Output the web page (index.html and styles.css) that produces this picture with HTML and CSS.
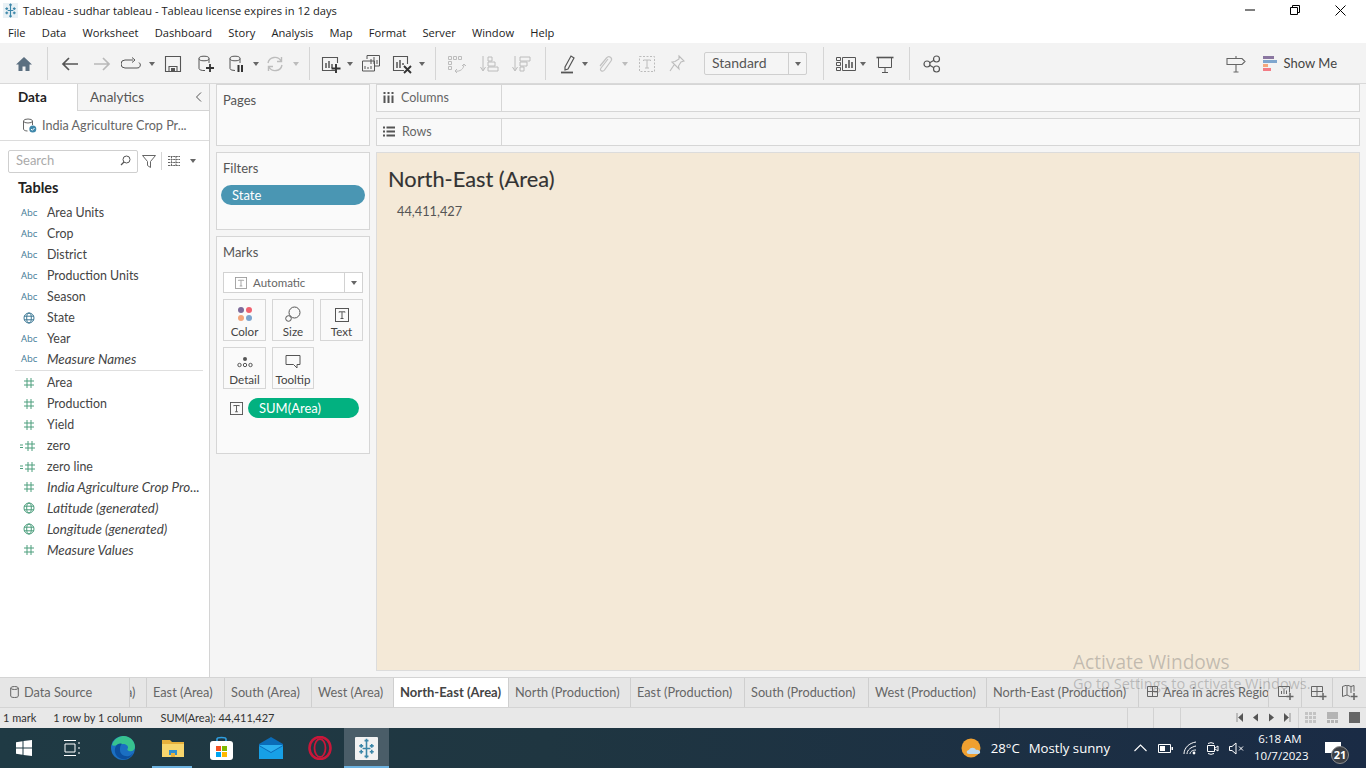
FILE: index.html
```html
<!DOCTYPE html>
<html lang="en">
<head>
  <meta charset="UTF-8" />
  <title>Tableau - sudhar tableau</title>
  <link rel="stylesheet" href="styles.css">
</head>
<body>

  <!-- shared icons -->
  <svg class="sprite" width="0" height="0">
    <symbol id="logo" viewBox="0 0 16 16">
      <g stroke="#3b86a8" stroke-width="1.2" fill="none">
        <path d="M8 2v12M5 8h6M4 4.500v3M2.500 6h3M12 4.500v3M10.500 6h3M4 9v3M2.500 10.500h3M12 9v3M10.500 10.500h3M8 .5v3M6.500 2h3M8 12.500v3M6.500 14h3"/>
      </g>
    </symbol>
    <symbol id="caret" viewBox="0 0 8 20"><path d="M1 8h6l-3 4z" fill="currentColor"/></symbol>
    <symbol id="hash" viewBox="0 0 12 12">
      <path d="M4 1v10M8 1v10M1 4h10M1 8h10" stroke="currentColor" fill="none"/>
    </symbol>
    <symbol id="calc" viewBox="0 0 18 12">
      <path d="M1 5h3M1 7.500h3M9 1v10M13 1v10M6 4h10M6 8h10" stroke="currentColor" fill="none"/>
    </symbol>
    <symbol id="globe" viewBox="0 0 12 12">
      <g stroke="currentColor" fill="none">
        <circle cx="6" cy="6" r="5"/><ellipse cx="6" cy="6" rx="2.300" ry="5"/><path d="M1 4.200h10M1 7.800h10"/>
      </g>
    </symbol>
    <symbol id="tbox" viewBox="0 0 14 14">
      <rect x=".5" y=".5" width="13" height="13" fill="none" stroke="currentColor"/>
      <path d="M4 4.500V3.800h6v.7M7 4v6.500M5.500 10.500h3" fill="none" stroke="currentColor"/>
    </symbol>
  </svg>

  <!-- title and menu -->
  <div class="titlebar">
    <svg class="app-logo"><use href="#logo"/></svg>
    <span class="title-text">Tableau - sudhar tableau - Tableau license expires in 12 days</span>
    <div class="window-btns">
      <svg width="10" height="10" viewBox="0 0 10 10"><path d="M0 5h10" stroke="#000"/></svg>
      <svg width="10" height="10" viewBox="0 0 10 10"><path d="M.5 2.500h7v7h-7zM2.500 2.500V.5h7v7h-2" fill="none" stroke="#000"/></svg>
      <svg width="11" height="11" viewBox="0 0 11 11"><path d="M.5.500l10 10M10.500.5l-10 10" stroke="#000"/></svg>
    </div>
  </div>
  <nav class="menubar">
    <span>File</span><span>Data</span><span>Worksheet</span><span>Dashboard</span><span>Story</span><span>Analysis</span><span>Map</span><span>Format</span><span>Server</span><span>Window</span><span>Help</span>
  </nav>

  <!-- toolbar -->
  <div class="toolbar">
    <svg class="ti" viewBox="0 0 20 20"><path d="M10 3L2 10.500h2.500V17h4v-4.500h3V17h4v-6.500H18z" fill="#5b6f80"/></svg>
    <i class="sep ml13"></i>
    <svg class="ti ml12" viewBox="0 0 20 20"><path d="M18 10H3M9 4l-6 6 6 6" fill="none" stroke="#555" stroke-width="1.700"/></svg>
    <svg class="ti ml12" viewBox="0 0 20 20"><path d="M2 10h15M11 4l6 6-6 6" fill="none" stroke="#b9b9b9" stroke-width="1.700"/></svg>
    <svg class="ti ml9" viewBox="0 0 20 20"><path d="M12 6H4a3 3 0 0 0 0 8h12a3 3 0 0 0 2-5.500M11 3.500L14 6l-3 2.500" fill="none" stroke="#555"/></svg>
    <svg class="tc ml7"><use href="#caret"/></svg>
    <svg class="ti ml7" viewBox="0 0 20 20"><path d="M2.500 2.500h15v15h-15zM6 17.500v-5h8v5" fill="none" stroke="#555" stroke-width="1.100"/><path d="M8 14h4v3.500H8z" fill="#555"/></svg>
    <svg class="ti ml12" viewBox="0 0 20 20"><path d="M4 4.500v10a5 2 0 0 0 6 2M14 9V4.500" fill="none" stroke="#555"/><ellipse cx="9" cy="4.500" rx="5" ry="2.300" fill="none" stroke="#555"/><path d="M15 10v8M11 14h8" stroke="#333" stroke-width="1.800"/></svg>
    <svg class="ti ml11" viewBox="0 0 20 20"><path d="M4 4.500v10a5 2 0 0 0 5 2M14 9V4.500" fill="none" stroke="#555"/><ellipse cx="9" cy="4.500" rx="5" ry="2.300" fill="none" stroke="#555"/><path d="M12.500 11v7M16 11v7" stroke="#333" stroke-width="2"/></svg>
    <svg class="tc ml6"><use href="#caret"/></svg>
    <svg class="ti ml5" viewBox="0 0 20 20"><path d="M3 9a7 7 0 0 1 13-2M17 11a7 7 0 0 1-13 2M16.500 3v4.500H12M3.500 17v-4.500H8" fill="none" stroke="#bcbcbc" stroke-width="1.400"/></svg>
    <svg class="tc ml7 off"><use href="#caret"/></svg>
    <i class="sep ml9"></i>
    <svg class="ti ml11" viewBox="0 0 20 20"><path d="M14 16.500H1.500v-13h15V9" fill="none" stroke="#555" stroke-width="1.100"/><path d="M5 9v5M8 7v7M11 10v4" stroke="#555" stroke-width="1.500"/><path d="M15 10v9M10.500 14.500h9" stroke="#333" stroke-width="1.900"/></svg>
    <svg class="tc ml5"><use href="#caret"/></svg>
    <svg class="ti ml7" viewBox="0 0 20 20"><path d="M6 5V1.500h12.500V12H14M1.500 7h12v10h-12z" fill="#f3f3f3" stroke="#555"/><path d="M4 15v-3M7 15v-2M10 15v-3M10 10V5M13 10V3M16 10V6" stroke="#555"/></svg>
    <svg class="ti ml11" viewBox="0 0 20 20"><path d="M12 16.500H1.500v-14h14V10" fill="none" stroke="#555" stroke-width="1.100"/><path d="M5 8v6M8 6v8M11 9v2" stroke="#555" stroke-width="1.500"/><path d="M12 12l7 7M19 12l-7 7" stroke="#333" stroke-width="1.900"/></svg>
    <svg class="tc ml6"><use href="#caret"/></svg>
    <i class="sep ml9"></i>
    <svg class="ti ml11" viewBox="0 0 20 20"><g fill="none" stroke="#bcbcbc"><path d="M1.500 2.500h3v3h-3zM6.500 2.500h3v3h-3zM11.500 2.500h3v3h-3zM1.500 7.500h3v3h-3zM1.500 12.500h3v3h-3z"/><path d="M8 17c5 1 9-2 9-7M15 12l2-2 2 2M10 15l-2 2 2 2"/></g></svg>
    <svg class="ti ml12" viewBox="0 0 20 20"><g fill="none" stroke="#bcbcbc"><path d="M4 2v14M1.500 13L4 17l2.500-4" /><path d="M9 3h4v4H9zM9 8h7v4H9zM9 13h10v4H9z"/></g></svg>
    <svg class="ti ml12" viewBox="0 0 20 20"><g fill="none" stroke="#bcbcbc"><path d="M4 2v14M1.500 13L4 17l2.500-4" /><path d="M9 3h10v4H9zM9 8h7v4H9zM9 13h4v4H9z"/></g></svg>
    <i class="sep ml14"></i>
    <svg class="ti ml12" viewBox="0 0 20 20"><path d="M7 13L13 2l3 2-6 11-3 1z" fill="none" stroke="#555" stroke-width="1.200"/><path d="M3 18.500h12" stroke="#555" stroke-width="1.800"/></svg>
    <svg class="tc ml3"><use href="#caret"/></svg>
    <svg class="ti ml6" viewBox="0 0 20 20"><path d="M13 5l-7 9c-2 3 2 4 3.500 2L16 7c2-3-2-6-4.500-3L5 12" fill="none" stroke="#c2c2c2" stroke-width="1.200"/></svg>
    <svg class="tc ml6 off"><use href="#caret"/></svg>
    <svg class="ti ml8" viewBox="0 0 20 20"><path d="M2.500 2.500h15v15h-15z" fill="none" stroke="#bcbcbc" stroke-dasharray="2 1.500"/><path d="M6.500 7V6h7v1M10 6v8M8 14h4" fill="none" stroke="#bcbcbc"/></svg>
    <svg class="ti ml10" viewBox="0 0 20 20"><path d="M12 2l5 5-3 1-2.500 4 .5 3-7-7 3-.5 4-2.500zM7 11l-4 6" fill="none" stroke="#bcbcbc" stroke-width="1.100"/></svg>
    <div class="fit-select ml17"><span>Standard</span><b><svg class="tc"><use href="#caret"/></svg></b></div>
    <i class="sep ml16"></i>
    <svg class="ti ml12" viewBox="0 0 20 20"><g fill="none" stroke="#555"><path d="M.5 3.500h4v3h-4zM.5 8.500h4v3h-4zM.5 13.500h4v3h-4zM6.500 3.500h13v13h-13z"/></g><path d="M10 14v-4M13 14V6M16 14v-6" stroke="#555" stroke-width="1.600"/></svg>
    <svg class="tc ml3"><use href="#caret"/></svg>
    <svg class="ti ml8" viewBox="0 0 20 20"><path d="M3.500 4v9.500h13V4M10 14v4M7 18.500h6" fill="none" stroke="#555"/><path d="M1.500 3.500h17" stroke="#555" stroke-width="1.600"/></svg>
    <i class="sep ml14"></i>
    <svg class="ti ml12" viewBox="0 0 20 20"><g fill="none" stroke="#555" stroke-width="1.200"><circle cx="5" cy="10" r="3"/><circle cx="14.500" cy="5" r="3"/><circle cx="14.500" cy="15" r="3"/><path d="M7.700 8.700L12 6.300M7.700 11.300L12 13.700"/></g></svg>
    <div class="toolbar-right">
      <svg class="ti" viewBox="0 0 20 20"><path d="M1 4.500h15l3 3-3 3H1zM10 2v2.500M10 10.500V18M7.500 18h5" fill="none" stroke="#666" stroke-width="1.100"/></svg>
      <div class="showme">
        <svg width="15" height="16" viewBox="0 0 15 16"><path d="M0 0h11v3H0z" fill="#8a76a0"/><path d="M0 4h14v3H0z" fill="#7fa6ce"/><path d="M0 8h5v3H0z" fill="#f4a77c"/><path d="M0 12h8v3H0z" fill="#f37c85"/></svg>
        <span>Show Me</span>
      </div>
    </div>
  </div>

  <!-- main area -->
  <div class="workspace">
    <aside class="data-pane">
      <div class="pane-tabs">
        <div class="pane-tab active">Data</div>
        <div class="pane-tab">Analytics
          <svg class="collapse" width="7" height="10" viewBox="0 0 7 10"><path d="M6 .5L1.500 5 6 9.500" fill="none" stroke="#555"/></svg>
        </div>
      </div>
      <div class="source-row">
        <svg width="15" height="15" viewBox="0 0 15 15"><ellipse cx="6" cy="3" rx="4.500" ry="2" fill="none" stroke="#666"/><path d="M1.500 3v8c0 1 1.500 2 4 2M10.500 3v4" fill="none" stroke="#666"/><circle cx="10.800" cy="11" r="3.500" fill="#3f88ab"/><path d="M9 11l1.300 1.300L12.500 10" fill="none" stroke="#fff"/></svg>
        <span>India Agriculture Crop Pr...</span>
      </div>
      <div class="search-row">
        <div class="search-box"><span>Search</span>
          <svg width="11" height="11" viewBox="0 0 11 11"><circle cx="6.500" cy="4.500" r="3.500" fill="none" stroke="#555"/><path d="M4 7l-3 3" stroke="#555" stroke-width="1.300"/></svg>
        </div>
        <svg class="search-filter" width="14" height="13" viewBox="0 0 14 13"><path d="M.5.500h13L8.500 6.500v6l-3-2v-4z" fill="none" stroke="#666"/></svg>
        <i class="search-sep"></i>
        <svg class="search-list" width="12" height="10" viewBox="0 0 12 10"><path d="M0 .5h12M0 3.500h12M0 6.500h12M0 9.500h12M3.500 0v10M8 0v10" stroke="#666" stroke-dasharray="2 .6"/></svg>
        <svg class="tc search-caret"><use href="#caret"/></svg>
      </div>
      <h3 class="tables-title">Tables</h3>
      <ul class="field-list">
        <li><span class="abc">Abc</span>Area Units</li>
        <li><span class="abc">Abc</span>Crop</li>
        <li><span class="abc">Abc</span>District</li>
        <li><span class="abc">Abc</span>Production Units</li>
        <li><span class="abc">Abc</span>Season</li>
        <li><span class="ficon dim"><svg width="12" height="12"><use href="#globe"/></svg></span>State</li>
        <li><span class="abc">Abc</span>Year</li>
        <li class="gen"><span class="abc">Abc</span>Measure Names</li>
      </ul>
      <hr class="field-sep">
      <ul class="field-list">
        <li><span class="ficon"><svg width="12" height="12"><use href="#hash"/></svg></span>Area</li>
        <li><span class="ficon"><svg width="12" height="12"><use href="#hash"/></svg></span>Production</li>
        <li><span class="ficon"><svg width="12" height="12"><use href="#hash"/></svg></span>Yield</li>
        <li><span class="ficon"><svg class="calc" width="18" height="12"><use href="#calc"/></svg></span>zero</li>
        <li><span class="ficon"><svg class="calc" width="18" height="12"><use href="#calc"/></svg></span>zero line</li>
        <li class="gen"><span class="ficon"><svg width="12" height="12"><use href="#hash"/></svg></span>India Agriculture Crop Pro...</li>
        <li class="gen"><span class="ficon"><svg width="12" height="12"><use href="#globe"/></svg></span>Latitude (generated)</li>
        <li class="gen"><span class="ficon"><svg width="12" height="12"><use href="#globe"/></svg></span>Longitude (generated)</li>
        <li class="gen"><span class="ficon"><svg width="12" height="12"><use href="#hash"/></svg></span>Measure Values</li>
      </ul>
    </aside>

    <section class="cards">
      <div class="card card-pages"><div class="card-title">Pages</div></div>
      <div class="card card-filters">
        <div class="card-title">Filters</div>
        <div class="pill pill-blue">State</div>
      </div>
      <div class="card card-marks">
        <div class="card-title">Marks</div>
        <div class="mark-select">
          <svg class="mark-t" width="12" height="12"><use href="#tbox"/></svg>
          <span>Automatic</span>
          <b><svg class="tc"><use href="#caret"/></svg></b>
        </div>
        <div class="mark-grid">
          <div class="mark-btn">
            <svg width="16" height="16" viewBox="0 0 16 16"><circle cx="4" cy="4" r="3" fill="#7d6a9a"/><circle cx="12" cy="4" r="3" fill="#f0616f"/><circle cx="4" cy="12" r="3" fill="#f3a47a"/><circle cx="12" cy="12" r="3" fill="#7ba4cf"/></svg>
            Color
          </div>
          <div class="mark-btn">
            <svg width="16" height="16" viewBox="0 0 16 16"><circle cx="9.500" cy="6.500" r="5.500" fill="none" stroke="#555"/><circle cx="3.500" cy="12.500" r="2.800" fill="#fafafa" stroke="#555"/></svg>
            Size
          </div>
          <div class="mark-btn">
            <svg class="tdark" width="14" height="14"><use href="#tbox"/></svg>
            Text
          </div>
          <div class="mark-btn">
            <svg width="16" height="16" viewBox="0 0 16 16"><circle cx="8" cy="5" r="2" fill="#555"/><g fill="none" stroke="#555"><circle cx="2.500" cy="11" r="1.700"/><circle cx="8" cy="11" r="1.700"/><circle cx="13.500" cy="11" r="1.700"/></g></svg>
            Detail
          </div>
          <div class="mark-btn">
            <svg width="16" height="16" viewBox="0 0 16 16"><path d="M1 1.500h14v9h-3v3.500l-3.500-3.500H1z" fill="none" stroke="#555"/></svg>
            Tooltip
          </div>
        </div>
        <div class="mark-field">
          <svg class="tdark" width="13" height="13"><use href="#tbox"/></svg>
          <div class="pill pill-green">SUM(Area)</div>
        </div>
      </div>
    </section>

    <section class="view">
      <div class="shelf">
        <div class="shelf-label">
          <svg width="11" height="11" viewBox="0 0 11 11"><path d="M1.500 0v2M1.500 3.500V11M5.500 0v2M5.500 3.500V11M9.500 0v2M9.500 3.500V11" stroke="#555" stroke-width="2"/></svg>
          Columns
        </div>
      </div>
      <div class="shelf">
        <div class="shelf-label">
          <svg width="12" height="11" viewBox="0 0 12 11"><path d="M0 1.500h2M3.500 1.500H12M0 5.500h2M3.500 5.500H12M0 9.500h2M3.500 9.500H12" stroke="#555" stroke-width="1.800"/></svg>
          Rows
        </div>
      </div>
      <div class="canvas">
        <h2 class="sheet-title">North-East (Area)</h2>
        <div class="sheet-value">44,411,427</div>
      </div>
    </section>
  </div>

  <!-- sheet tabs -->
  <div class="tabbar">
    <div class="tab tab-source">
      <svg width="9" height="12" viewBox="0 0 9 12"><ellipse cx="4.500" cy="2" rx="3.800" ry="1.500" fill="none" stroke="#666"/><path d="M.7 2v8c0 1 1.500 1.500 3.800 1.500S8.300 11 8.300 10V2" fill="none" stroke="#666"/></svg>
      Data Source
    </div>
    <div class="tab tab-cut"><span>a)</span></div>
    <div class="tab t78">East (Area)</div>
    <div class="tab t87">South (Area)</div>
    <div class="tab t82">West (Area)</div>
    <div class="tab t115 active">North-East (Area)</div>
    <div class="tab t122">North (Production)</div>
    <div class="tab t114">East (Production)</div>
    <div class="tab t124">South (Production)</div>
    <div class="tab t118">West (Production)</div>
    <div class="tab t152">North-East (Production)</div>
    <div class="tab t130">
      <svg width="12" height="11" viewBox="0 0 12 11"><path d="M.5.500h10v10H.5zM.5 5.500h10M5.500.5v10" fill="none" stroke="#666"/></svg>
      Area in acres Regio
    </div>
    <div class="tab t33 tab-new">
      <svg width="18" height="16" viewBox="0 0 18 16"><path d="M9 11.500H.5v-10h11v6" fill="none" stroke="#666"/><path d="M3.500 9V6M6 9V4M8.500 9V5.500" stroke="#666"/><path d="M12 8v7M8.500 11.500h7" stroke="#666" stroke-width="1.500"/></svg>
    </div>
    <div class="tab t31 tab-new">
      <svg width="18" height="16" viewBox="0 0 18 16"><path d="M9 11.500H.5v-10h11v6M.5 6.500h11M6 1.500v10" fill="none" stroke="#666"/><path d="M12 8v7M8.500 11.500h7" stroke="#666" stroke-width="1.500"/></svg>
    </div>
    <div class="tab tab-last tab-new">
      <svg width="18" height="16" viewBox="0 0 18 16"><path d="M8 11.500L5 10l-4.500 1.500v-10L5 0l4 1.500 3-1v6M5 0v10M9 1.500V8" fill="none" stroke="#666"/><path d="M12 8v7M8.500 11.500h7" stroke="#666" stroke-width="1.500"/></svg>
    </div>
  </div>

  <!-- status bar -->
  <div class="statusbar">
    <span class="st-mark">1 mark</span>
    <span class="st-rows">1 row by 1 column</span>
    <span class="st-sum">SUM(Area): 44,411,427</span>
    <i class="st-div st-d1"></i><i class="st-div st-d2"></i><i class="st-div st-d3"></i><i class="st-div st-d4"></i>
    <div class="pager">
      <svg width="7" height="9" viewBox="0 0 7 9"><path d="M1 0v9M7 .5v8L2.500 4.500z" fill="#555" stroke="#555" stroke-width=".6"/></svg>
      <svg width="7" height="9" viewBox="0 0 7 9"><path d="M6 .5v8L1 4.500z" fill="#555"/></svg>
      <svg width="7" height="9" viewBox="0 0 7 9"><path d="M1 .5v8L6 4.500z" fill="#555"/></svg>
      <svg width="7" height="9" viewBox="0 0 7 9"><path d="M6 0v9M0 .5v8L4.500 4.500z" fill="#555" stroke="#555" stroke-width=".6"/></svg>
    </div>
    <i class="st-div st-d5"></i>
    <div class="view-modes">
      <svg width="11" height="11" viewBox="0 0 11 11"><path d="M0 0h3v3H0zM4 0h3v3H4zM8 0h3v3H8zM0 4h3v3H0zM4 4h3v3H4zM8 4h3v3H8zM0 8h3v3H0zM4 8h3v3H4zM8 8h3v3H8z" fill="#c4c4c4"/></svg>
      <svg width="11" height="11" viewBox="0 0 11 11"><path d="M0 0h11v7H0zM0 8h3v3H0zM4 8h3v3H4zM8 8h3v3H8z" fill="#b4b4b4"/></svg>
      <svg width="11" height="11" viewBox="0 0 11 11"><path d="M0 0h11v11H0z" fill="#666"/></svg>
    </div>
  </div>

  <!-- windows taskbar -->
  <footer class="taskbar">
    <div class="task-icons">
      <div class="task-item w48">
        <svg width="16" height="16" viewBox="0 0 16 16"><path d="M0 2.300l6.500-1v6.300H0zM7.500 1.100L16 0v7.600H7.500zM0 8.500h6.500v6.300l-6.500-1zM7.500 8.500H16V16l-8.500-1.100z" fill="#fff"/></svg>
      </div>
      <div class="task-item w49">
        <svg width="17" height="16" viewBox="0 0 17 16"><path d="M0 .5h12M0 15.500h12M1 4h10v8H1zM15 2v2M15 7v2M15 12v2" fill="none" stroke="#fff"/></svg>
      </div>
      <div class="task-item w51">
        <svg width="24" height="24" viewBox="0 0 24 24">
          <circle cx="12" cy="12" r="12" fill="#1b6fc2"/>
          <path d="M1 9C3 2 9 0 13 0c6 0 11 5 11 11 0 3-3 5-6 4-2-.6-2-2-1-3 .5-2-2-4-5-4-5 0-9 3-11 1z" fill="#37c28f"/>
          <path d="M9 14c0 4 4 7 9 6 2-.5 3-2 4-3-2 5-7 7-11 6-6-1-9-8-6-13 1-2 4-3 6-2-2 1-2 4-2 6z" fill="#0c4f9e"/>
        </svg>
      </div>
      <div class="task-item w49 running">
        <svg width="22" height="20" viewBox="0 0 22 20"><path d="M0 2h8l2 2h12v15H0z" fill="#e8b13c"/><path d="M0 6h22v13H0z" fill="#f8d66d"/><path d="M7 12h8v5H7z" fill="#2f8fd0"/><path d="M9 15h4v4H9z" fill="#e8b13c"/></svg>
      </div>
      <div class="task-item w49">
        <svg width="23" height="24" viewBox="0 0 23 24"><path d="M7 6V3c0-2 9-2 9 0v3" fill="none" stroke="#2f9fe0" stroke-width="1.600"/><rect y="5" width="23" height="19" rx="3" fill="#fff"/><path d="M6 10h5v5H6z" fill="#f25022"/><path d="M12 10h5v5h-5z" fill="#7fba00"/><path d="M6 16h5v5H6z" fill="#00a4ef"/><path d="M12 16h5v5h-5z" fill="#ffb900"/></svg>
      </div>
      <div class="task-item w49">
        <svg width="24" height="22" viewBox="0 0 24 22"><path d="M12 0L0 7v15h24V7z" fill="#0b6cb8"/><path d="M0 8h24L12 15z" fill="#2cb0f0"/><path d="M0 9l12 7 12-7v13H0z" fill="#17a0e6"/></svg>
      </div>
      <div class="task-item w49">
        <svg width="24" height="24" viewBox="0 0 24 24"><ellipse cx="12" cy="12" rx="10.500" ry="11" fill="none" stroke="#c9173a" stroke-width="2.600"/><ellipse cx="12" cy="12" rx="5.500" ry="9" fill="none" stroke="#c9173a" stroke-width="1.800"/></svg>
      </div>
      <div class="task-item w45 active">
        <div class="tableau-tile"><svg width="21" height="21"><use href="#logo"/></svg></div>
      </div>
    </div>
    <div class="tray">
      <div class="weather">
        <svg width="22" height="20" viewBox="0 0 22 20"><circle cx="10" cy="10" r="9.500" fill="#f0a030"/><path d="M8 16c-3 0-3-4 0-4 1-3 6-3 7 0 4-1 6 4 2 4z" fill="#bcd9ef"/></svg>
        <span class="temp">28°C</span><span class="cond">Mostly sunny</span>
      </div>
      <svg class="tr-caret" width="13" height="8" viewBox="0 0 13 8"><path d="M.5 7l6-6 6 6" fill="none" stroke="#fff" stroke-width="1.100"/></svg>
      <svg class="tr-batt" width="15" height="9" viewBox="0 0 15 9"><path d="M.5.500h12v8H.5z" fill="none" stroke="#fff"/><path d="M2 2h5v5H2zM13.500 3H15v3h-1.500z" fill="#fff"/></svg>
      <svg class="tr-wifi" width="14" height="14" viewBox="0 0 14 14"><path d="M1 13C1 7 6 2 13 1M4 13c0-4 4-7 9-8M7 13c0-2 2-4 6-4" fill="none" stroke="#fff"/><circle cx="11" cy="12" r="1.400" fill="#fff"/></svg>
      <svg class="tr-meet" width="13" height="15" viewBox="0 0 13 15"><path d="M8 2.500A4 2 0 0 0 2 2.500M2 12.500a4 2 0 0 0 6 0M1.500 4.500h7v6h-7zM9 7l3-2v5l-3-2" fill="none" stroke="#fff"/></svg>
      <svg class="tr-vol" width="15" height="13" viewBox="0 0 15 13"><path d="M.5 4.500h2.500L7 1v11L3 8.500H.5zM10 4.500l4 4M14 4.500l-4 4" fill="none" stroke="#fff"/></svg>
      <div class="clock"><div>6:18 AM</div><div>10/7/2023</div></div>
      <div class="notify">
        <svg width="16" height="11" viewBox="0 0 16 11"><path d="M0 0h16v11H0z" fill="#fff"/></svg>
        <span class="notify-count">21</span>
      </div>
    </div>
  </footer>

  <!-- windows watermark, sits over the canvas and the tabs -->
  <div class="watermark">
    <div class="wm-big">Activate Windows</div>
    <div class="wm-small">Go to Settings to activate Windows.</div>
  </div>

</body>
</html>
```

FILE: styles.css
```css
* {
  margin: 0;
  padding: 0;
  box-sizing: border-box;
}

body {
  width: 1366px;
  height: 768px;
  overflow: hidden;
  position: relative;
  background: #fff;
  color: #444;
  font-family: Lato, "Open Sans", sans-serif;
  font-size: 13px;
}

ul {
  list-style: none;
}

svg {
  flex: none;
  display: block;
}

.sprite {
  position: absolute;
}

/* === TITLE + MENU === */
.titlebar {
  height: 22px;
  display: flex;
  align-items: center;
  padding: 0 0 2px 3px;
  font-family: "Open Sans", sans-serif;
  font-size: 11.15px;
  color: #222;
}

.app-logo {
  width: 15px;
  height: 15px;
  margin-right: 5px;
  background: #e9f1f5;
}

.window-btns {
  margin-left: auto;
  display: flex;
  align-items: center;
  gap: 35px;
  padding-right: 20px;
}

.menubar {
  height: 21px;
  display: flex;
  align-items: center;
  gap: 16.2px;
  padding-left: 8px;
  font-family: "Open Sans", sans-serif;
  font-size: 11.15px;
  color: #222;
}

/* === TOOLBAR === */
.toolbar {
  height: 41px;
  display: flex;
  align-items: center;
  padding: 1px 0 0 14px;
  background: #f3f3f3;
  border-bottom: 1px solid #d9d9d9;
  color: #666;
}

.ti {
  width: 20px;
  height: 20px;
}

.tc {
  width: 8px;
  height: 20px;
  color: #666;
}

.tc.off {
  color: #bcbcbc;
}

.sep {
  width: 1px;
  height: 33px;
  background: #d5d5d5;
}

.ml3 { margin-left: 3px; }
.ml5 { margin-left: 5px; }
.ml6 { margin-left: 6px; }
.ml7 { margin-left: 7px; }
.ml8 { margin-left: 8px; }
.ml9 { margin-left: 9px; }
.ml10 { margin-left: 10px; }
.ml11 { margin-left: 11px; }
.ml12 { margin-left: 12px; }
.ml13 { margin-left: 13px; }
.ml14 { margin-left: 14px; }
.ml16 { margin-left: 16px; }
.ml17 { margin-left: 17px; }

.fit-select {
  width: 103px;
  height: 23px;
  display: flex;
  align-items: center;
  padding-left: 7px;
  background: #f5f5f5;
  border: 1px solid #cfcfcf;
  border-radius: 2px;
  font-size: 14px;
  color: #555;
}

.fit-select span {
  padding-bottom: 2px;
}

.fit-select b {
  margin-left: auto;
  width: 18px;
  height: 100%;
  display: flex;
  align-items: center;
  justify-content: center;
  border-left: 1px solid #cfcfcf;
}

.toolbar-right {
  margin-left: auto;
  display: flex;
  align-items: center;
  padding-right: 29px;
}

.showme {
  display: flex;
  align-items: center;
  gap: 6px;
  margin-left: 17px;
  font-size: 13px;
  color: #444;
}

.showme span {
  padding-bottom: 2px;
}

/* === WORKSPACE === */
.workspace {
  height: 593px;
  display: flex;
  background: #f5f5f5;
}

.data-pane {
  width: 210px;
  flex: none;
  background: #fff;
  border-right: 1px solid #d4d4d4;
}

.pane-tabs {
  height: 27px;
  display: flex;
}

.pane-tab {
  position: relative;
  flex: 1;
  display: flex;
  align-items: center;
  padding: 0 0 1px 12px;
  background: #f5f5f5;
  border-bottom: 1px solid #d4d4d4;
  font-size: 13.5px;
  color: #555;
}

.pane-tab.active {
  flex: none;
  width: 78px;
  padding-left: 18px;
  background: #fff;
  border-right: 1px solid #d4d4d4;
  border-bottom: none;
  font-weight: 700;
  color: #222;
}

.collapse {
  position: absolute;
  right: 7px;
  top: 8px;
}

.source-row {
  height: 30px;
  display: flex;
  align-items: center;
  gap: 5px;
  padding: 0 0 1px 22px;
  border-bottom: 1px solid #dcdcdc;
  font-size: 12.6px;
  color: #666;
}

.search-row {
  height: 37px;
  display: flex;
  align-items: center;
  padding: 3px 0 0 8px;
}

.search-box {
  width: 130px;
  height: 23px;
  display: flex;
  align-items: center;
  justify-content: space-between;
  padding: 0 6px 2px 7px;
  border: 1px solid #cfcfcf;
  border-radius: 2px;
  color: #aaa;
}

.search-filter {
  margin-left: 4px;
}

.search-sep {
  width: 1px;
  height: 18px;
  margin-left: 5px;
  background: #d5d5d5;
}

.search-list {
  margin-left: 6px;
}

.search-caret {
  margin-left: 9px;
}

.tables-title {
  height: 23px;
  padding-left: 18px;
  line-height: 20px;
  font-size: 14.5px;
  font-weight: 700;
  color: #222;
}

.field-list li {
  height: 21px;
  display: flex;
  align-items: center;
  padding: 2px 0 0 21px;
  font-size: 12.4px;
  color: #444;
  white-space: nowrap;
}

.field-list li.gen {
  padding-top: 0;
  font-size: 13.4px;
  font-style: italic;
}

.abc {
  width: 26px;
  flex: none;
  font-family: "Open Sans", sans-serif;
  font-size: 9.5px;
  font-style: normal;
  color: #3f7a96;
}

.ficon {
  position: relative;
  width: 26px;
  height: 12px;
  flex: none;
  padding-left: 2px;
  color: #4c9e7d;
}

.ficon.dim {
  color: #3f7a96;
}

.ficon .calc {
  margin-left: -4px;
}

.field-sep {
  margin: 1px 6px 0 15px;
  border: none;
  border-top: 1px solid #dfdfdf;
}

/* === SHELF CARDS === */
.cards {
  width: 166px;
  flex: none;
  display: flex;
  flex-direction: column;
  gap: 6px;
  padding: 0 6px;
}

.card {
  background: #fafafa;
  border: 1px solid #d6d6d6;
  padding: 0 6px;
}

.card-pages {
  height: 62px;
}

.card-filters {
  height: 78px;
}

.card-marks {
  height: 218px;
}

.card-title {
  height: 29px;
  line-height: 31px;
  color: #555;
}

.pill {
  height: 20px;
  line-height: 20px;
  border-radius: 10px;
  color: #fff;
  font-size: 13px;
}

.pill-blue {
  margin: 3px -2px 0 -2px;
  padding-left: 11px;
  background: #4a96b3;
}

.pill-green {
  flex: 1;
  padding-left: 11px;
  background: #02b180;
}

.mark-select {
  height: 21px;
  margin-top: 6px;
  display: flex;
  align-items: center;
  padding-left: 11px;
  background: #fff;
  border: 1px solid #d2d2d2;
  font-size: 11.5px;
  color: #666;
}

.mark-t {
  margin-right: 6px;
  color: #999;
}

.mark-select b {
  margin-left: auto;
  width: 18px;
  height: 100%;
  display: flex;
  align-items: center;
  justify-content: center;
  border-left: 1px solid #d2d2d2;
}

.mark-grid {
  margin-top: 6px;
  display: grid;
  grid-template-columns: 43px 42px 43px;
  grid-auto-rows: 42px;
  gap: 6px;
}

.mark-btn {
  display: flex;
  flex-direction: column;
  align-items: center;
  justify-content: flex-end;
  gap: 3px;
  padding-bottom: 2px;
  border: 1px solid #d6d6d6;
  font-size: 11.6px;
  color: #444;
}

.tdark {
  color: #555;
}

.mark-field {
  margin: 9px 4px 0 7px;
  display: flex;
  align-items: center;
  gap: 5px;
}

/* === VIEW === */
.view {
  flex: 1;
  display: flex;
  flex-direction: column;
  gap: 6px;
  padding: 0 6px 6px 0;
}

.shelf {
  height: 28px;
  background: #f9f9f9;
  border: 1px solid #d6d6d6;
}

.shelf-label {
  width: 125px;
  height: 100%;
  display: flex;
  align-items: center;
  gap: 7px;
  padding: 0 0 1px 6px;
  border-right: 1px solid #d6d6d6;
  font-size: 12.5px;
  color: #666;
}

.canvas {
  flex: 1;
  padding: 12px 11px;
  background: #f4e9d7;
  border: 1px solid #dcdcdc;
}

.sheet-title {
  font-size: 21.8px;
  font-weight: 400;
  -webkit-text-stroke: 0.15px #333;
  color: #333;
}

.sheet-value {
  margin: 11px 0 0 9px;
  font-size: 12.8px;
  color: #555;
}

/* === TABS === */
.tabbar {
  height: 31px;
  display: flex;
  background: #e6e6e6;
  border-top: 1px solid #d4d4d4;
  border-bottom: 1px solid #d4d4d4;
}

.tab {
  flex: none;
  display: flex;
  align-items: center;
  gap: 4px;
  padding: 0 0 2px 6px;
  border-right: 1px solid #cfcfcf;
  overflow: hidden;
  white-space: nowrap;
  font-size: 12.75px;
  color: #666;
}

.tab.active {
  background: #fff;
  font-size: 13px;
  font-weight: 700;
  color: #444;
}

.tab-source { width: 130px; padding-left: 10px; gap: 5px; }
.tab-cut { width: 17px; padding-left: 0; }
.tab-cut span { margin-left: -4px; }
.t78 { width: 78px; }
.t87 { width: 87px; }
.t82 { width: 82px; }
.t115 { width: 115px; }
.t122 { width: 122px; }
.t114 { width: 114px; }
.t124 { width: 124px; }
.t118 { width: 118px; }
.t152 { width: 152px; }
.t130 { width: 130px; padding-left: 8px; }
.t33 { width: 33px; }
.t31 { width: 31px; }
.tab-last { width: 33px; border-right: none; }

.tab-new {
  padding: 0 0 0 9px;
}

/* === STATUS BAR === */
.statusbar {
  position: relative;
  height: 20px;
  display: flex;
  align-items: center;
  padding-bottom: 1px;
  background: #e8e8e8;
  font-size: 11px;
  color: #333;
}

.st-mark { margin-left: 3px; }
.st-rows { margin-left: 17px; }
.st-sum { margin-left: 18px; }

.st-div {
  position: absolute;
  top: 0;
  width: 1px;
  height: 100%;
  background: #d2d2d2;
}

.st-d1 { left: 999px; }
.st-d2 { left: 1127px; }
.st-d3 { left: 1153px; }
.st-d4 { left: 1180px; }
.st-d5 { left: 1298px; }

.pager {
  margin-left: auto;
  display: flex;
  gap: 9px;
  padding-right: 75px;
}

.view-modes {
  position: absolute;
  right: 6px;
  top: 4px;
  display: flex;
  gap: 11px;
}

/* === TASKBAR === */
.taskbar {
  height: 40px;
  display: flex;
  align-items: center;
  background: linear-gradient(90deg, #1f3a44 0%, #1f3641 40%, #1a2b45 100%);
  color: #fff;
  font-family: "Open Sans", sans-serif;
}

.task-icons {
  display: flex;
  height: 100%;
}

.task-item {
  position: relative;
  height: 100%;
  display: flex;
  align-items: center;
  justify-content: center;
}

.w45 { width: 45px; }
.w48 { width: 48px; }
.w49 { width: 49px; }
.w51 { width: 51px; }

.task-item.running::after {
  content: "";
  position: absolute;
  left: 4px;
  right: 5px;
  bottom: 0;
  height: 2px;
  background: #6cb2e0;
}

.task-item.active {
  background: #4a5d68;
  box-shadow: inset 0 -2px 0 #6cb2e0;
}

.tableau-tile {
  width: 23px;
  height: 23px;
  display: flex;
  align-items: center;
  justify-content: center;
  background: #f2f2f2;
  border-radius: 1px;
}

.tray {
  margin-left: auto;
  display: flex;
  align-items: center;
  height: 100%;
}

.weather {
  display: flex;
  align-items: center;
  font-size: 13.2px;
}

.temp {
  margin-left: 8px;
}

.cond {
  margin-left: 9px;
}

.tr-caret { margin-left: 24px; }
.tr-batt { margin-left: 11px; }
.tr-wifi { margin-left: 10px; }
.tr-meet { margin-left: 9px; }
.tr-vol { margin-left: 10px; }

.clock {
  margin-left: 10px;
  width: 52px;
  text-align: center;
  font-size: 11.5px;
  line-height: 17px;
  padding-bottom: 2px;
}

.notify {
  position: relative;
  width: 60px;
  height: 100%;
  padding: 14px 0 0 19px;
}

.notify-count {
  position: absolute;
  left: 25px;
  top: 18px;
  width: 18px;
  height: 18px;
  border-radius: 50%;
  border: 1px solid #8d8d8d;
  background: #3b3f45;
  text-align: center;
  line-height: 16px;
  font-size: 11px;
  font-weight: 700;
}

/* === WATERMARK === */
.watermark {
  position: absolute;
  left: 1073px;
  top: 650px;
  color: rgba(110, 110, 110, 0.38);
  white-space: nowrap;
  pointer-events: none;
  font-family: "Open Sans", sans-serif;
}

.wm-big {
  font-size: 19.1px;
  line-height: 24px;
}

.wm-small {
  margin-top: 1px;
  font-size: 14.5px;
  line-height: 18px;
}
```
